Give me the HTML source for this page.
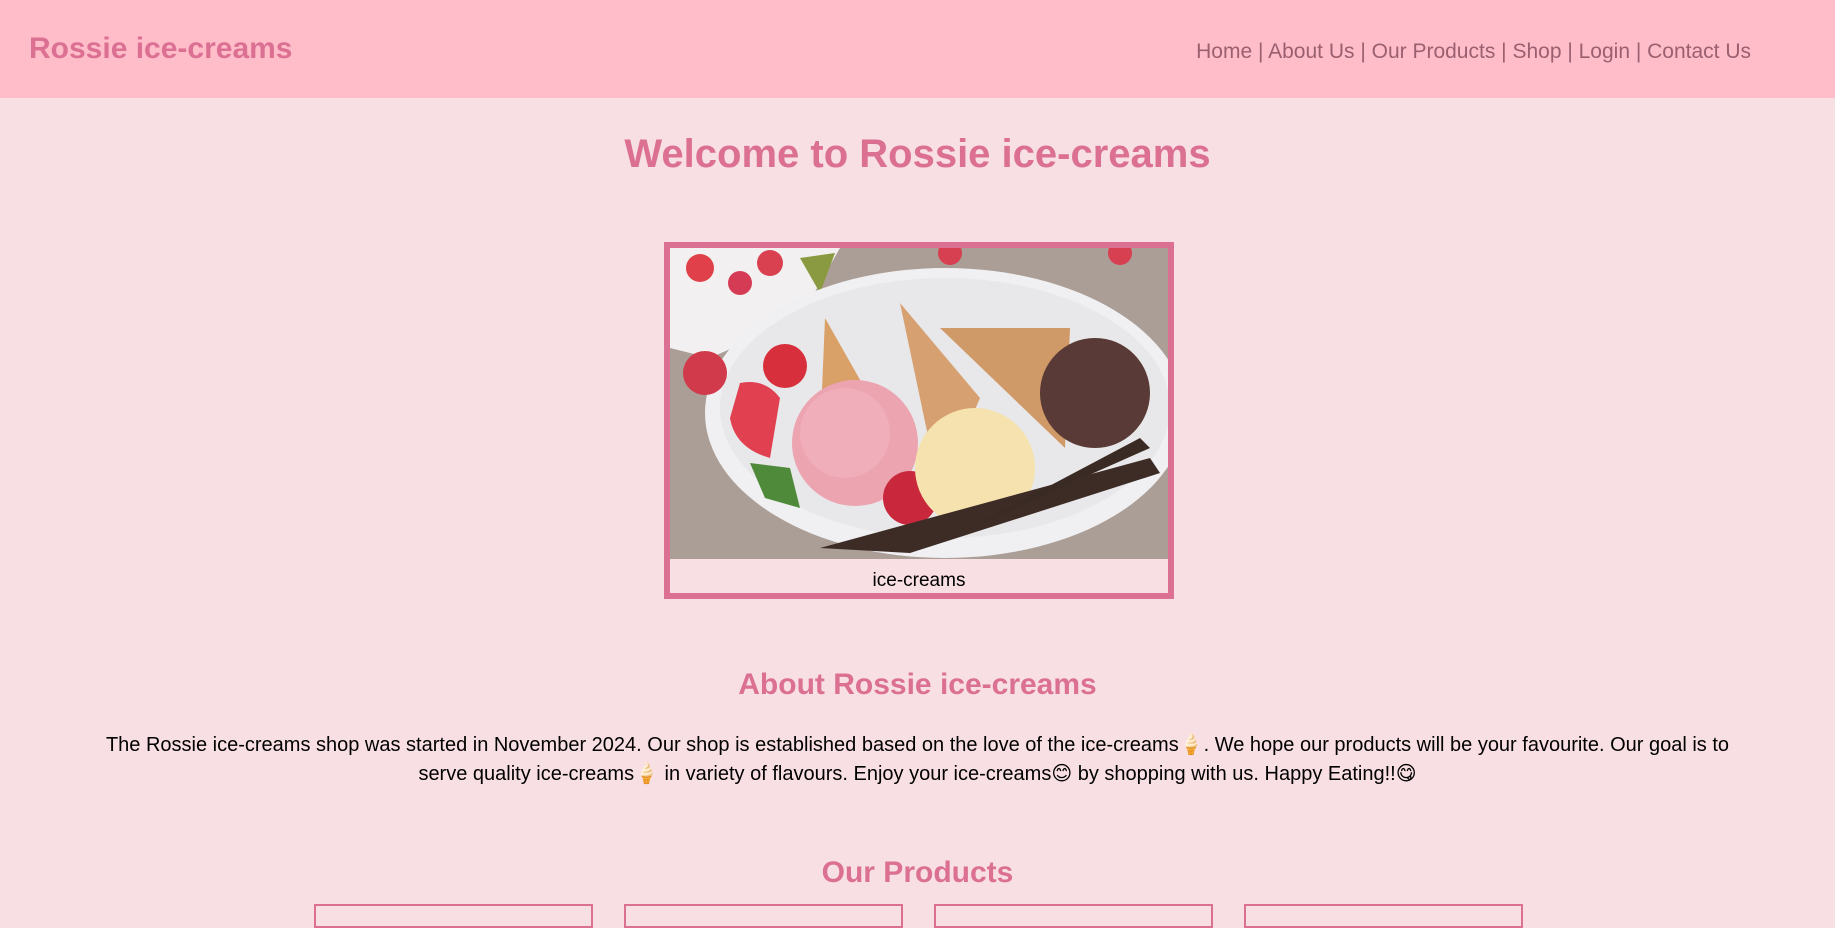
<!DOCTYPE html>
<html><head><meta charset="utf-8"><style>
html,body{margin:0;padding:0}
body{width:1835px;height:911px;overflow:hidden;background:#f8dfe3;font-family:"Comic Sans MS","Liberation Sans","DejaVu Sans",sans-serif;position:relative}
.hdr{position:absolute;left:0;top:0;width:1835px;height:98px;background:#ffbdc9}
.logo{position:absolute;left:29px;top:32px;font-size:30px;font-weight:bold;color:#db7093;white-space:nowrap}
.nav{position:absolute;right:84px;top:40px;font-size:21px;color:#9b6070;white-space:nowrap}
h1{position:absolute;left:0;width:1835px;top:132px;margin:0;text-align:center;font-size:40px;color:#db7093}
.fig{position:absolute;left:664px;top:242px;width:498px;height:345px;border:6px solid #db7093;background:#f8dfe3}
.cap{position:absolute;left:0;width:498px;top:323px;text-align:center;font-size:19px;color:#000;line-height:20px}
h2{position:absolute;left:0;width:1835px;margin:0;text-align:center;font-size:30px;color:#db7093}
p{position:absolute;left:90px;width:1655px;top:731px;margin:0;text-align:center;font-size:20px;line-height:29px;color:#000}
.box{position:absolute;top:904px;width:275px;height:20px;border:2px solid #db7093}
</style></head><body>
<div class="hdr"><div class="logo">Rossie ice-creams</div>
<div class="nav">Home | About Us | Our Products | Shop | Login | Contact Us</div></div>
<h1>Welcome to Rossie ice-creams</h1>
<div class="fig">
<svg width="498" height="311" viewBox="0 0 498 311">
<rect width="498" height="311" fill="#9c8f88"/>
<rect width="498" height="311" fill="#b5a9a1" opacity=".6"/>
<path d="M0 0 L170 0 L130 70 L40 110 L0 100Z" fill="#f2f0f0"/>
<circle cx="30" cy="20" r="14" fill="#e0404a"/><circle cx="70" cy="35" r="12" fill="#d63b55"/><circle cx="100" cy="15" r="13" fill="#d94050"/>
<path d="M130 10 L165 5 L150 45 Z" fill="#8a9a40"/>
<circle cx="280" cy="5" r="12" fill="#d64050"/><circle cx="450" cy="5" r="12" fill="#d64050"/>
<ellipse cx="275" cy="165" rx="240" ry="145" fill="#f0f0f2"/>
<ellipse cx="275" cy="160" rx="225" ry="130" fill="#e8e8ea"/>
<circle cx="35" cy="125" r="22" fill="#d03a4a"/><circle cx="115" cy="118" r="22" fill="#d82f3c"/>
<path d="M70 135 Q95 130 110 150 L100 210 Q65 200 60 170Z" fill="#e04050"/>
<path d="M155 70 L240 220 L150 190Z" fill="#d9a068"/>
<path d="M230 55 L310 150 L270 245 Z" fill="#d6a070"/>
<path d="M270 80 L400 80 L395 200 Z" fill="#d09a68"/>
<circle cx="185" cy="195" r="63" fill="#eba4b0"/>
<circle cx="175" cy="185" r="45" fill="#f2b5c0" opacity=".6"/>
<circle cx="240" cy="250" r="27" fill="#c9283c"/>
<circle cx="305" cy="220" r="60" fill="#f6e2ae"/>
<circle cx="425" cy="145" r="55" fill="#5a3a36"/>
<path d="M80 215 L120 220 L130 260 L95 250Z" fill="#4e8a3a"/>
<path d="M150 300 L480 210 L490 225 L240 305Z" fill="#3d2b26"/>
<path d="M470 190 L480 200 L300 280 Z" fill="#3a2a24"/>
</svg>
<div class="cap">ice-creams</div></div>
<h2 style="top:668px">About Rossie ice-creams</h2>
<p>The Rossie ice-creams shop was started in November 2024. Our shop is established based on the love of the ice-creams🍦. We hope our products will be your favourite. Our goal is to serve quality ice-creams🍦 in variety of flavours. Enjoy your ice-creams😊 by shopping with us. Happy Eating!!😋</p>
<h2 style="top:856px">Our Products</h2>
<div class="box" style="left:314px"></div><div class="box" style="left:624px"></div><div class="box" style="left:934px"></div><div class="box" style="left:1244px"></div>
</body></html>
